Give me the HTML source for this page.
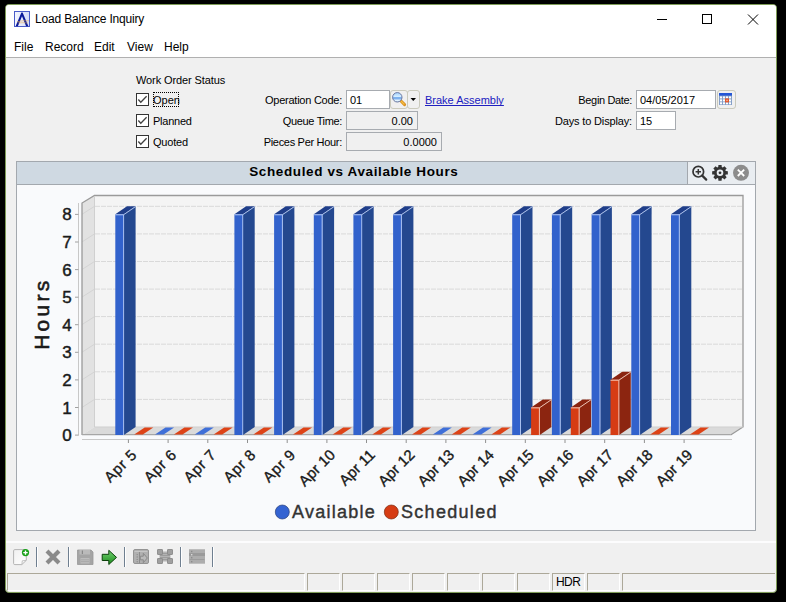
<!DOCTYPE html>
<html><head><meta charset="utf-8">
<style>
*{box-sizing:border-box;margin:0;padding:0}
html,body{width:786px;height:602px;background:#000;overflow:hidden;font-family:"Liberation Sans", sans-serif;}
.abs{position:absolute}
#win{position:absolute;left:5px;top:4px;width:772px;height:589px;background:#f0f0f0;border:1px solid #7e9b57;border-radius:4px;overflow:hidden}
.t{position:absolute;white-space:nowrap;font-size:11px;color:#000;line-height:13px}
.box{position:absolute;background:#fff;border:1px solid #a7abb0}
.ro{background:#f0f0f0}
.cb{position:absolute;width:13px;height:13px;border:1px solid #333;background:#fff}
.sb{position:absolute;top:573px;height:18px;border-top:1px solid #aca899;border-left:1px solid #aca899;border-right:1px solid #fff;border-bottom:1px solid #fff}
.sep{position:absolute;top:547px;width:2px;height:20px;background:#6f7f90;border-right:1px solid #fff}
</style></head><body>
<div id="win"></div>
<!-- title bar -->
<div class="abs" style="left:6px;top:5px;width:770px;height:52px;background:#fff;border-radius:3px 3px 0 0"></div>
<div class="abs" style="left:6px;top:57px;width:770px;height:1px;background:#b0b0b0"></div>
<svg class="abs" style="left:14px;top:11px" width="16" height="16" viewBox="0 0 16 16">
 <defs><linearGradient id="ig" x1="0" y1="0" x2="1" y2="0"><stop offset="0" stop-color="#f4f6ff"/><stop offset="1" stop-color="#d4dcf8"/></linearGradient></defs><rect x="0.5" y="0.5" width="15" height="15" fill="url(#ig)" stroke="#4a5cc8" stroke-width="1"/>
 <path d="M1.6,15.2 L7.4,1.6 L8.6,1.6 L14.4,15.2 L12.1,15.2 L8,5.2 L3.9,15.2 Z" fill="#0a1a9a"/>
 <path d="M3,10.8 Q9,9.2 15,9.8 M4,12 Q9,11.4 14,12" stroke="#e8a848" stroke-width="0.7" fill="none" opacity="0.75"/>
</svg>
<div class="t" style="left:35px;top:12px;font-size:12px;line-height:15px;color:#000;letter-spacing:-0.18px">Load Balance Inquiry</div>
<svg class="abs" style="left:640px;top:5px" width="136" height="30">
 <line x1="17" y1="14.5" x2="27" y2="14.5" stroke="#000" stroke-width="1"/>
 <rect x="62.5" y="9.5" width="9" height="9" fill="none" stroke="#000" stroke-width="1"/>
 <path d="M108,9.5 L118,19.5 M118,9.5 L108,19.5" stroke="#000" stroke-width="1"/>
</svg>
<!-- menu -->
<div class="t" style="left:14px;top:40px;font-size:12px;line-height:15px">File</div>
<div class="t" style="left:45px;top:40px;font-size:12px;line-height:15px">Record</div>
<div class="t" style="left:94px;top:40px;font-size:12px;line-height:15px">Edit</div>
<div class="t" style="left:127px;top:40px;font-size:12px;line-height:15px">View</div>
<div class="t" style="left:164px;top:40px;font-size:12px;line-height:15px">Help</div>

<!-- form -->
<div class="t" style="left:136px;top:74px;letter-spacing:-0.1px">Work Order Status</div>
<div class="cb" style="left:136px;top:93px"></div>
<div class="cb" style="left:136px;top:114px"></div>
<div class="cb" style="left:136px;top:135px"></div>
<svg class="abs" style="left:136px;top:93px" width="13" height="56">
 <path d="M2.3,6.5 L4.8,9.3 L10.6,3.3 M2.3,27.5 L4.8,30.3 L10.6,24.3 M2.3,48.5 L4.8,51.3 L10.6,45.3" fill="none" stroke="#404040" stroke-width="1.3"/>
</svg>
<div class="t" style="left:153px;top:94px">Open</div>
<div class="t" style="left:153px;top:115px;letter-spacing:-0.25px">Planned</div>
<div class="t" style="left:153px;top:136px;letter-spacing:-0.2px">Quoted</div>
<div class="abs" style="left:153px;top:92px;width:26px;height:15px;border:1px dotted #000"></div>

<div class="t" style="left:200px;width:142px;text-align:right;top:94px;letter-spacing:-0.25px">Operation Code:</div>
<div class="t" style="left:200px;width:142px;text-align:right;top:115px;letter-spacing:-0.35px">Queue Time:</div>
<div class="t" style="left:200px;width:142px;text-align:right;top:136px;letter-spacing:-0.3px">Pieces Per Hour:</div>
<div class="box" style="left:346px;top:90px;width:44px;height:19px"></div>
<div class="t" style="left:350px;top:94px">01</div>
<div class="box ro" style="left:346px;top:111px;width:72px;height:19px"></div>
<div class="t" style="left:346px;width:67px;text-align:right;top:115px">0.00</div>
<div class="box ro" style="left:346px;top:132px;width:96px;height:19px"></div>
<div class="t" style="left:346px;width:91px;text-align:right;top:136px">0.0000</div>
<div class="abs" style="left:390px;top:90px;width:18px;height:19px;border:1px solid #cacabc;border-radius:3px"></div>
<div class="abs" style="left:407px;top:90px;width:13px;height:19px;border:1px solid #cacabc;border-radius:3px"></div>
<svg class="abs" style="left:390px;top:90px" width="30" height="19">
 <defs><linearGradient id="mg" x1="0" y1="0" x2="0" y2="1"><stop offset="0" stop-color="#9fd0ff"/><stop offset="0.45" stop-color="#d8f0ff"/><stop offset="0.55" stop-color="#5a9ae8"/><stop offset="0.85" stop-color="#e6f6ff"/><stop offset="1" stop-color="#a8d4f8"/></linearGradient></defs>
 <line x1="11" y1="11" x2="14.6" y2="14.6" stroke="#d89020" stroke-width="3" stroke-linecap="round"/>
 <line x1="11.3" y1="11.3" x2="14" y2="14" stroke="#f8c040" stroke-width="1.2" stroke-linecap="round"/>
 <circle cx="7.3" cy="7.3" r="4.7" fill="url(#mg)" stroke="#6c78a0" stroke-width="1"/>
 <path d="M20.5,8 L26,8 L23.25,11 Z" fill="#000"/>
</svg>
<div class="t" style="left:425px;top:94px;color:#2020c0;text-decoration:underline;text-decoration-skip-ink:none">Brake Assembly</div>

<div class="t" style="left:500px;width:132px;text-align:right;top:94px;letter-spacing:-0.35px">Begin Date:</div>
<div class="t" style="left:500px;width:132px;text-align:right;top:115px;letter-spacing:-0.15px">Days to Display:</div>
<div class="box" style="left:636px;top:90px;width:80px;height:19px"></div>
<div class="t" style="left:640px;top:94px">04/05/2017</div>
<div class="box" style="left:636px;top:111px;width:40px;height:19px"></div>
<div class="t" style="left:640px;top:115px">15</div>
<div class="abs" style="left:717px;top:90px;width:19px;height:19px;border:1px solid #cacabc;border-radius:3px"></div>
<svg class="abs" style="left:719px;top:93px" width="13" height="12">
 <rect x="0" y="0" width="13" height="12" fill="#86a0c8"/>
 <rect x="0" y="0" width="13" height="2.6" fill="#2456d6"/>
 <g fill="#fff">
 <rect x="1" y="3.4" width="2" height="2"/><rect x="4" y="3.4" width="2" height="2"/><rect x="7" y="3.4" width="2" height="2"/><rect x="10" y="3.4" width="2" height="2"/>
 <rect x="1" y="6.4" width="2" height="2"/><rect x="4" y="6.4" width="2" height="2"/><rect x="10" y="6.4" width="2" height="2"/>
 <rect x="1" y="9.3" width="2" height="2"/><rect x="4" y="9.3" width="2" height="2"/><rect x="7" y="9.3" width="2" height="2"/><rect x="10" y="9.3" width="2" height="2"/>
 </g>
 <rect x="6" y="5.4" width="4" height="4" fill="#e0562a"/>
 <rect x="7.3" y="6.7" width="1.4" height="1.4" fill="#f4c0a8"/>
</svg>

<!-- chart panel -->
<div class="abs" style="left:16px;top:161px;width:740px;height:370px;border:1px solid #a3a8ae;background:#f9fafc"></div>
<div class="abs" style="left:17px;top:162px;width:738px;height:23px;background:#cfd9e2;border-bottom:1px solid #a3a8ae"></div>
<div class="abs" style="left:687px;top:162px;width:68px;height:23px;background:#e9edf1;border-left:1px solid #a3a8ae;border-bottom:1px solid #a3a8ae"></div>
<div class="t" style="left:18.8px;width:670px;text-align:center;top:164px;font-size:13.5px;line-height:16px;font-weight:bold;letter-spacing:0.62px">Scheduled vs Available Hours</div>
<svg class="abs" style="left:687px;top:162px" width="68" height="22">
 <circle cx="11.3" cy="9.7" r="5.3" fill="none" stroke="#333" stroke-width="1.7"/>
 <path d="M8.6,9.7 H14 M11.3,7 V12.4" stroke="#333" stroke-width="1.5"/>
 <line x1="15.2" y1="13.6" x2="19.2" y2="17.6" stroke="#333" stroke-width="2.2" stroke-linecap="round"/>
 <g transform="translate(33,10.8)">
  <path d="M5.73,-1.77 L7.84,-1.59 L7.84,1.59 L5.73,1.77 L5.31,2.80 L6.67,4.42 L4.42,6.67 L2.80,5.31 L1.77,5.73 L1.59,7.84 L-1.59,7.84 L-1.77,5.73 L-2.80,5.31 L-4.42,6.67 L-6.67,4.42 L-5.31,2.80 L-5.73,1.77 L-7.84,1.59 L-7.84,-1.59 L-5.73,-1.77 L-5.31,-2.80 L-6.67,-4.42 L-4.42,-6.67 L-2.80,-5.31 L-1.77,-5.73 L-1.59,-7.84 L1.59,-7.84 L1.77,-5.73 L2.80,-5.31 L4.42,-6.67 L6.67,-4.42 L5.31,-2.80 Z" fill="#333"/>
  <circle r="3.3" fill="#e9edf1"/><circle r="1.4" fill="#333"/>
 </g>
 <circle cx="54" cy="10.8" r="8" fill="#8c8c8c"/>
 <path d="M50.8,7.6 L57.2,14 M57.2,7.6 L50.8,14" stroke="#fff" stroke-width="1.8"/>
</svg>
<svg width="786" height="602" style="position:absolute;left:0;top:0">
<rect x="94.5" y="195.5" width="648.5" height="231.5" fill="#f4f4f4"/>
<polygon points="82,203 94.5,195.5 94.5,427 82,435" fill="#e2e2e2"/>
<line x1="95" y1="399.4" x2="743" y2="399.4" stroke="#d9d9d9" stroke-width="1" stroke-dasharray="5,1"/>
<line x1="82" y1="407.4" x2="94.5" y2="399.4" stroke="#d4d4d4" stroke-width="1"/>
<line x1="95" y1="371.8" x2="743" y2="371.8" stroke="#d9d9d9" stroke-width="1" stroke-dasharray="5,1"/>
<line x1="82" y1="379.8" x2="94.5" y2="371.8" stroke="#d4d4d4" stroke-width="1"/>
<line x1="95" y1="344.2" x2="743" y2="344.2" stroke="#d9d9d9" stroke-width="1" stroke-dasharray="5,1"/>
<line x1="82" y1="352.2" x2="94.5" y2="344.2" stroke="#d4d4d4" stroke-width="1"/>
<line x1="95" y1="316.6" x2="743" y2="316.6" stroke="#d9d9d9" stroke-width="1" stroke-dasharray="5,1"/>
<line x1="82" y1="324.6" x2="94.5" y2="316.6" stroke="#d4d4d4" stroke-width="1"/>
<line x1="95" y1="289.1" x2="743" y2="289.1" stroke="#d9d9d9" stroke-width="1" stroke-dasharray="5,1"/>
<line x1="82" y1="297.1" x2="94.5" y2="289.1" stroke="#d4d4d4" stroke-width="1"/>
<line x1="95" y1="261.5" x2="743" y2="261.5" stroke="#d9d9d9" stroke-width="1" stroke-dasharray="5,1"/>
<line x1="82" y1="269.5" x2="94.5" y2="261.5" stroke="#d4d4d4" stroke-width="1"/>
<line x1="95" y1="233.9" x2="743" y2="233.9" stroke="#d9d9d9" stroke-width="1" stroke-dasharray="5,1"/>
<line x1="82" y1="241.9" x2="94.5" y2="233.9" stroke="#d4d4d4" stroke-width="1"/>
<line x1="95" y1="206.3" x2="743" y2="206.3" stroke="#d9d9d9" stroke-width="1" stroke-dasharray="5,1"/>
<line x1="82" y1="214.3" x2="94.5" y2="206.3" stroke="#d4d4d4" stroke-width="1"/>
<polygon points="82,435 94.5,427 743,427 730.6,435" fill="#dadada"/>
<polyline points="82,435 82,203 94.5,195.5 743,195.5 743,427 730.6,435" fill="none" stroke="#9a9a9a" stroke-width="1.3"/>
<line x1="94.5" y1="196" x2="94.5" y2="427" stroke="#d0d0d0" stroke-width="1"/>
<line x1="94.5" y1="427" x2="743" y2="427" stroke="#cfcfcf" stroke-width="1"/>
<line x1="82" y1="434.7" x2="730.6" y2="434.7" stroke="#a6a6a6" stroke-width="1.2"/>
<line x1="78.5" y1="203" x2="78.5" y2="435.5" stroke="#c8c8c8" stroke-width="1"/>
<line x1="75" y1="435.1" x2="78.5" y2="435.1" stroke="#a0a0a0" stroke-width="1"/>
<text x="71.6" y="441.1" text-anchor="end" font-family="Liberation Sans" font-size="17" fill="#1a1a1a" stroke="#1a1a1a" stroke-width="0.45">0</text>
<line x1="75" y1="407.5" x2="78.5" y2="407.5" stroke="#a0a0a0" stroke-width="1"/>
<text x="71.6" y="413.5" text-anchor="end" font-family="Liberation Sans" font-size="17" fill="#1a1a1a" stroke="#1a1a1a" stroke-width="0.45">1</text>
<line x1="75" y1="379.9" x2="78.5" y2="379.9" stroke="#a0a0a0" stroke-width="1"/>
<text x="71.6" y="385.9" text-anchor="end" font-family="Liberation Sans" font-size="17" fill="#1a1a1a" stroke="#1a1a1a" stroke-width="0.45">2</text>
<line x1="75" y1="352.3" x2="78.5" y2="352.3" stroke="#a0a0a0" stroke-width="1"/>
<text x="71.6" y="358.3" text-anchor="end" font-family="Liberation Sans" font-size="17" fill="#1a1a1a" stroke="#1a1a1a" stroke-width="0.45">3</text>
<line x1="75" y1="324.7" x2="78.5" y2="324.7" stroke="#a0a0a0" stroke-width="1"/>
<text x="71.6" y="330.7" text-anchor="end" font-family="Liberation Sans" font-size="17" fill="#1a1a1a" stroke="#1a1a1a" stroke-width="0.45">4</text>
<line x1="75" y1="297.2" x2="78.5" y2="297.2" stroke="#a0a0a0" stroke-width="1"/>
<text x="71.6" y="303.2" text-anchor="end" font-family="Liberation Sans" font-size="17" fill="#1a1a1a" stroke="#1a1a1a" stroke-width="0.45">5</text>
<line x1="75" y1="269.6" x2="78.5" y2="269.6" stroke="#a0a0a0" stroke-width="1"/>
<text x="71.6" y="275.6" text-anchor="end" font-family="Liberation Sans" font-size="17" fill="#1a1a1a" stroke="#1a1a1a" stroke-width="0.45">6</text>
<line x1="75" y1="242.0" x2="78.5" y2="242.0" stroke="#a0a0a0" stroke-width="1"/>
<text x="71.6" y="248.0" text-anchor="end" font-family="Liberation Sans" font-size="17" fill="#1a1a1a" stroke="#1a1a1a" stroke-width="0.45">7</text>
<line x1="75" y1="214.4" x2="78.5" y2="214.4" stroke="#a0a0a0" stroke-width="1"/>
<text x="71.6" y="220.4" text-anchor="end" font-family="Liberation Sans" font-size="17" fill="#1a1a1a" stroke="#1a1a1a" stroke-width="0.45">8</text>
<line x1="82" y1="439.5" x2="732" y2="439.5" stroke="#c8c8c8" stroke-width="1"/>
<line x1="128.4" y1="439.5" x2="128.4" y2="443" stroke="#909090" stroke-width="1"/>
<text transform="translate(137.8,455.7) rotate(-45)" text-anchor="end" font-family="Liberation Sans" font-size="15" letter-spacing="0.6" fill="#1a1a1a" stroke="#1a1a1a" stroke-width="0.35">Apr 5</text>
<line x1="168.1" y1="439.5" x2="168.1" y2="443" stroke="#909090" stroke-width="1"/>
<text transform="translate(177.5,455.7) rotate(-45)" text-anchor="end" font-family="Liberation Sans" font-size="15" letter-spacing="0.6" fill="#1a1a1a" stroke="#1a1a1a" stroke-width="0.35">Apr 6</text>
<line x1="207.8" y1="439.5" x2="207.8" y2="443" stroke="#909090" stroke-width="1"/>
<text transform="translate(217.2,455.7) rotate(-45)" text-anchor="end" font-family="Liberation Sans" font-size="15" letter-spacing="0.6" fill="#1a1a1a" stroke="#1a1a1a" stroke-width="0.35">Apr 7</text>
<line x1="247.5" y1="439.5" x2="247.5" y2="443" stroke="#909090" stroke-width="1"/>
<text transform="translate(256.9,455.7) rotate(-45)" text-anchor="end" font-family="Liberation Sans" font-size="15" letter-spacing="0.6" fill="#1a1a1a" stroke="#1a1a1a" stroke-width="0.35">Apr 8</text>
<line x1="287.2" y1="439.5" x2="287.2" y2="443" stroke="#909090" stroke-width="1"/>
<text transform="translate(296.6,455.7) rotate(-45)" text-anchor="end" font-family="Liberation Sans" font-size="15" letter-spacing="0.6" fill="#1a1a1a" stroke="#1a1a1a" stroke-width="0.35">Apr 9</text>
<line x1="326.9" y1="439.5" x2="326.9" y2="443" stroke="#909090" stroke-width="1"/>
<text transform="translate(336.2,455.7) rotate(-45)" text-anchor="end" font-family="Liberation Sans" font-size="15" letter-spacing="0.05" fill="#1a1a1a" stroke="#1a1a1a" stroke-width="0.35">Apr 10</text>
<line x1="366.5" y1="439.5" x2="366.5" y2="443" stroke="#909090" stroke-width="1"/>
<text transform="translate(375.9,455.7) rotate(-45)" text-anchor="end" font-family="Liberation Sans" font-size="15" letter-spacing="0.05" fill="#1a1a1a" stroke="#1a1a1a" stroke-width="0.35">Apr 11</text>
<line x1="406.2" y1="439.5" x2="406.2" y2="443" stroke="#909090" stroke-width="1"/>
<text transform="translate(415.6,455.7) rotate(-45)" text-anchor="end" font-family="Liberation Sans" font-size="15" letter-spacing="0.05" fill="#1a1a1a" stroke="#1a1a1a" stroke-width="0.35">Apr 12</text>
<line x1="445.9" y1="439.5" x2="445.9" y2="443" stroke="#909090" stroke-width="1"/>
<text transform="translate(455.3,455.7) rotate(-45)" text-anchor="end" font-family="Liberation Sans" font-size="15" letter-spacing="0.05" fill="#1a1a1a" stroke="#1a1a1a" stroke-width="0.35">Apr 13</text>
<line x1="485.6" y1="439.5" x2="485.6" y2="443" stroke="#909090" stroke-width="1"/>
<text transform="translate(495.0,455.7) rotate(-45)" text-anchor="end" font-family="Liberation Sans" font-size="15" letter-spacing="0.05" fill="#1a1a1a" stroke="#1a1a1a" stroke-width="0.35">Apr 14</text>
<line x1="525.3" y1="439.5" x2="525.3" y2="443" stroke="#909090" stroke-width="1"/>
<text transform="translate(534.7,455.7) rotate(-45)" text-anchor="end" font-family="Liberation Sans" font-size="15" letter-spacing="0.05" fill="#1a1a1a" stroke="#1a1a1a" stroke-width="0.35">Apr 15</text>
<line x1="565.0" y1="439.5" x2="565.0" y2="443" stroke="#909090" stroke-width="1"/>
<text transform="translate(574.4,455.7) rotate(-45)" text-anchor="end" font-family="Liberation Sans" font-size="15" letter-spacing="0.05" fill="#1a1a1a" stroke="#1a1a1a" stroke-width="0.35">Apr 16</text>
<line x1="604.7" y1="439.5" x2="604.7" y2="443" stroke="#909090" stroke-width="1"/>
<text transform="translate(614.1,455.7) rotate(-45)" text-anchor="end" font-family="Liberation Sans" font-size="15" letter-spacing="0.05" fill="#1a1a1a" stroke="#1a1a1a" stroke-width="0.35">Apr 17</text>
<line x1="644.4" y1="439.5" x2="644.4" y2="443" stroke="#909090" stroke-width="1"/>
<text transform="translate(653.8,455.7) rotate(-45)" text-anchor="end" font-family="Liberation Sans" font-size="15" letter-spacing="0.05" fill="#1a1a1a" stroke="#1a1a1a" stroke-width="0.35">Apr 18</text>
<line x1="684.1" y1="439.5" x2="684.1" y2="443" stroke="#909090" stroke-width="1"/>
<text transform="translate(693.5,455.7) rotate(-45)" text-anchor="end" font-family="Liberation Sans" font-size="15" letter-spacing="0.05" fill="#1a1a1a" stroke="#1a1a1a" stroke-width="0.35">Apr 19</text>
<polygon points="123.9,435.0 123.9,214.3 135.6,206.3 135.6,427.0" fill="#24488f"/>
<polygon points="115.3,214.3 123.9,214.3 135.6,206.3 127.0,206.3" fill="#1f3e8a"/>
<rect x="115.3" y="214.3" width="8.6" height="220.7" fill="#3262cc"/>
<polyline points="115.3,214.8 123.6,214.8 123.6,435.0" fill="none" stroke="#b9cdf5" stroke-opacity="0.85" stroke-width="1"/>
<line x1="123.6" y1="214.8" x2="135.6" y2="206.6" stroke="#b9cdf5" stroke-opacity="0.85" stroke-width="1"/>
<polygon points="134.2,434.5 142.8,434.5 153.3,427.5 144.7,427.5" fill="#dd4317"/>
<polygon points="155.0,434.5 163.6,434.5 174.1,427.5 165.5,427.5" fill="#3f6fd8"/>
<polygon points="173.9,434.5 182.5,434.5 193.0,427.5 184.4,427.5" fill="#dd4317"/>
<polygon points="194.7,434.5 203.3,434.5 213.8,427.5 205.2,427.5" fill="#3f6fd8"/>
<polygon points="213.6,434.5 222.2,434.5 232.7,427.5 224.1,427.5" fill="#dd4317"/>
<polygon points="243.0,435.0 243.0,214.3 254.7,206.3 254.7,427.0" fill="#24488f"/>
<polygon points="234.4,214.3 243.0,214.3 254.7,206.3 246.1,206.3" fill="#1f3e8a"/>
<rect x="234.4" y="214.3" width="8.6" height="220.7" fill="#3262cc"/>
<polyline points="234.4,214.8 242.7,214.8 242.7,435.0" fill="none" stroke="#b9cdf5" stroke-opacity="0.85" stroke-width="1"/>
<line x1="242.7" y1="214.8" x2="254.7" y2="206.6" stroke="#b9cdf5" stroke-opacity="0.85" stroke-width="1"/>
<polygon points="253.3,434.5 261.9,434.5 272.4,427.5 263.8,427.5" fill="#dd4317"/>
<polygon points="282.7,435.0 282.7,214.3 294.4,206.3 294.4,427.0" fill="#24488f"/>
<polygon points="274.1,214.3 282.7,214.3 294.4,206.3 285.8,206.3" fill="#1f3e8a"/>
<rect x="274.1" y="214.3" width="8.6" height="220.7" fill="#3262cc"/>
<polyline points="274.1,214.8 282.4,214.8 282.4,435.0" fill="none" stroke="#b9cdf5" stroke-opacity="0.85" stroke-width="1"/>
<line x1="282.4" y1="214.8" x2="294.4" y2="206.6" stroke="#b9cdf5" stroke-opacity="0.85" stroke-width="1"/>
<polygon points="293.0,434.5 301.6,434.5 312.1,427.5 303.5,427.5" fill="#dd4317"/>
<polygon points="322.4,435.0 322.4,214.3 334.1,206.3 334.1,427.0" fill="#24488f"/>
<polygon points="313.8,214.3 322.4,214.3 334.1,206.3 325.4,206.3" fill="#1f3e8a"/>
<rect x="313.8" y="214.3" width="8.6" height="220.7" fill="#3262cc"/>
<polyline points="313.8,214.8 322.1,214.8 322.1,435.0" fill="none" stroke="#b9cdf5" stroke-opacity="0.85" stroke-width="1"/>
<line x1="322.1" y1="214.8" x2="334.1" y2="206.6" stroke="#b9cdf5" stroke-opacity="0.85" stroke-width="1"/>
<polygon points="332.7,434.5 341.3,434.5 351.8,427.5 343.2,427.5" fill="#dd4317"/>
<polygon points="362.0,435.0 362.0,214.3 373.7,206.3 373.7,427.0" fill="#24488f"/>
<polygon points="353.4,214.3 362.0,214.3 373.7,206.3 365.1,206.3" fill="#1f3e8a"/>
<rect x="353.4" y="214.3" width="8.6" height="220.7" fill="#3262cc"/>
<polyline points="353.4,214.8 361.7,214.8 361.7,435.0" fill="none" stroke="#b9cdf5" stroke-opacity="0.85" stroke-width="1"/>
<line x1="361.7" y1="214.8" x2="373.7" y2="206.6" stroke="#b9cdf5" stroke-opacity="0.85" stroke-width="1"/>
<polygon points="372.3,434.5 380.9,434.5 391.4,427.5 382.8,427.5" fill="#dd4317"/>
<polygon points="401.7,435.0 401.7,214.3 413.4,206.3 413.4,427.0" fill="#24488f"/>
<polygon points="393.1,214.3 401.7,214.3 413.4,206.3 404.8,206.3" fill="#1f3e8a"/>
<rect x="393.1" y="214.3" width="8.6" height="220.7" fill="#3262cc"/>
<polyline points="393.1,214.8 401.4,214.8 401.4,435.0" fill="none" stroke="#b9cdf5" stroke-opacity="0.85" stroke-width="1"/>
<line x1="401.4" y1="214.8" x2="413.4" y2="206.6" stroke="#b9cdf5" stroke-opacity="0.85" stroke-width="1"/>
<polygon points="412.0,434.5 420.6,434.5 431.1,427.5 422.5,427.5" fill="#dd4317"/>
<polygon points="432.8,434.5 441.4,434.5 451.9,427.5 443.3,427.5" fill="#3f6fd8"/>
<polygon points="451.7,434.5 460.3,434.5 470.8,427.5 462.2,427.5" fill="#dd4317"/>
<polygon points="472.5,434.5 481.1,434.5 491.6,427.5 483.0,427.5" fill="#3f6fd8"/>
<polygon points="491.4,434.5 500.0,434.5 510.5,427.5 501.9,427.5" fill="#dd4317"/>
<polygon points="520.8,435.0 520.8,214.3 532.5,206.3 532.5,427.0" fill="#24488f"/>
<polygon points="512.2,214.3 520.8,214.3 532.5,206.3 523.9,206.3" fill="#1f3e8a"/>
<rect x="512.2" y="214.3" width="8.6" height="220.7" fill="#3262cc"/>
<polyline points="512.2,214.8 520.5,214.8 520.5,435.0" fill="none" stroke="#b9cdf5" stroke-opacity="0.85" stroke-width="1"/>
<line x1="520.5" y1="214.8" x2="532.5" y2="206.6" stroke="#b9cdf5" stroke-opacity="0.85" stroke-width="1"/>
<polygon points="539.7,435.0 539.7,407.4 551.4,399.4 551.4,427.0" fill="#8c2510"/>
<polygon points="531.1,407.4 539.7,407.4 551.4,399.4 542.8,399.4" fill="#8a2410"/>
<rect x="531.1" y="407.4" width="8.6" height="27.6" fill="#d63c14"/>
<polyline points="531.1,407.9 539.4,407.9 539.4,435.0" fill="none" stroke="#f6cfc0" stroke-opacity="0.85" stroke-width="1"/>
<line x1="539.4" y1="407.9" x2="551.4" y2="399.7" stroke="#f6cfc0" stroke-opacity="0.85" stroke-width="1"/>
<polygon points="560.5,435.0 560.5,214.3 572.2,206.3 572.2,427.0" fill="#24488f"/>
<polygon points="551.9,214.3 560.5,214.3 572.2,206.3 563.6,206.3" fill="#1f3e8a"/>
<rect x="551.9" y="214.3" width="8.6" height="220.7" fill="#3262cc"/>
<polyline points="551.9,214.8 560.2,214.8 560.2,435.0" fill="none" stroke="#b9cdf5" stroke-opacity="0.85" stroke-width="1"/>
<line x1="560.2" y1="214.8" x2="572.2" y2="206.6" stroke="#b9cdf5" stroke-opacity="0.85" stroke-width="1"/>
<polygon points="579.4,435.0 579.4,407.4 591.1,399.4 591.1,427.0" fill="#8c2510"/>
<polygon points="570.8,407.4 579.4,407.4 591.1,399.4 582.5,399.4" fill="#8a2410"/>
<rect x="570.8" y="407.4" width="8.6" height="27.6" fill="#d63c14"/>
<polyline points="570.8,407.9 579.1,407.9 579.1,435.0" fill="none" stroke="#f6cfc0" stroke-opacity="0.85" stroke-width="1"/>
<line x1="579.1" y1="407.9" x2="591.1" y2="399.7" stroke="#f6cfc0" stroke-opacity="0.85" stroke-width="1"/>
<polygon points="600.2,435.0 600.2,214.3 611.9,206.3 611.9,427.0" fill="#24488f"/>
<polygon points="591.6,214.3 600.2,214.3 611.9,206.3 603.3,206.3" fill="#1f3e8a"/>
<rect x="591.6" y="214.3" width="8.6" height="220.7" fill="#3262cc"/>
<polyline points="591.6,214.8 599.9,214.8 599.9,435.0" fill="none" stroke="#b9cdf5" stroke-opacity="0.85" stroke-width="1"/>
<line x1="599.9" y1="214.8" x2="611.9" y2="206.6" stroke="#b9cdf5" stroke-opacity="0.85" stroke-width="1"/>
<polygon points="619.1,435.0 619.1,379.8 630.8,371.8 630.8,427.0" fill="#8c2510"/>
<polygon points="610.5,379.8 619.1,379.8 630.8,371.8 622.2,371.8" fill="#8a2410"/>
<rect x="610.5" y="379.8" width="8.6" height="55.2" fill="#d63c14"/>
<polyline points="610.5,380.3 618.8,380.3 618.8,435.0" fill="none" stroke="#f6cfc0" stroke-opacity="0.85" stroke-width="1"/>
<line x1="618.8" y1="380.3" x2="630.8" y2="372.1" stroke="#f6cfc0" stroke-opacity="0.85" stroke-width="1"/>
<polygon points="639.9,435.0 639.9,214.3 651.6,206.3 651.6,427.0" fill="#24488f"/>
<polygon points="631.3,214.3 639.9,214.3 651.6,206.3 643.0,206.3" fill="#1f3e8a"/>
<rect x="631.3" y="214.3" width="8.6" height="220.7" fill="#3262cc"/>
<polyline points="631.3,214.8 639.6,214.8 639.6,435.0" fill="none" stroke="#b9cdf5" stroke-opacity="0.85" stroke-width="1"/>
<line x1="639.6" y1="214.8" x2="651.6" y2="206.6" stroke="#b9cdf5" stroke-opacity="0.85" stroke-width="1"/>
<polygon points="650.2,434.5 658.8,434.5 669.3,427.5 660.7,427.5" fill="#dd4317"/>
<polygon points="679.6,435.0 679.6,214.3 691.3,206.3 691.3,427.0" fill="#24488f"/>
<polygon points="671.0,214.3 679.6,214.3 691.3,206.3 682.7,206.3" fill="#1f3e8a"/>
<rect x="671.0" y="214.3" width="8.6" height="220.7" fill="#3262cc"/>
<polyline points="671.0,214.8 679.3,214.8 679.3,435.0" fill="none" stroke="#b9cdf5" stroke-opacity="0.85" stroke-width="1"/>
<line x1="679.3" y1="214.8" x2="691.3" y2="206.6" stroke="#b9cdf5" stroke-opacity="0.85" stroke-width="1"/>
<polygon points="689.9,434.5 698.5,434.5 709.0,427.5 700.4,427.5" fill="#dd4317"/>
<text transform="translate(49,313.6) rotate(-90)" text-anchor="middle" font-family="Liberation Sans" font-size="21" letter-spacing="3.3" fill="#1a1a1a" stroke="#1a1a1a" stroke-width="0.6">Hours</text>
<circle cx="282.3" cy="512" r="7" fill="#3463d2" stroke="#2a3f7a" stroke-width="0.7"/>
<text x="292" y="517.5" font-family="Liberation Sans" font-size="18" letter-spacing="1.25" fill="#333" stroke="#333" stroke-width="0.4">Available</text>
<circle cx="391.3" cy="512" r="7" fill="#d63c14" stroke="#7a2a10" stroke-width="0.7"/>
<text x="401" y="517.5" font-family="Liberation Sans" font-size="18" letter-spacing="1.3" fill="#333" stroke="#333" stroke-width="0.4">Scheduled</text>
</svg>

<!-- toolbar -->
<div class="abs" style="left:6px;top:541px;width:770px;height:2px;background:#fcfcfd"></div>
<svg class="abs" style="left:0;top:540px" width="230" height="30">
 <defs>
  <linearGradient id="dg" x1="0" y1="0" x2="1" y2="1"><stop offset="0" stop-color="#f0f0f0"/><stop offset="1" stop-color="#ffffff"/></linearGradient>
  <linearGradient id="ag" x1="0" y1="0" x2="0" y2="1"><stop offset="0" stop-color="#70d070"/><stop offset="1" stop-color="#1e8e1e"/></linearGradient>
 </defs>
 <path d="M13.6,10.8 Q13.6,9.6 14.8,9.6 H25 Q26.3,9.6 26.3,10.8 V20.3 L21.8,24.6 H14.8 Q13.6,24.6 13.6,23.4 Z" fill="url(#dg)" stroke="#b4b4b4" stroke-width="1"/>
 <path d="M26.3,20.3 L22.3,20.8 L21.8,24.6" fill="none" stroke="#b4b4b4" stroke-width="0.8"/>
 <circle cx="25.5" cy="12.6" r="3.6" fill="#18a018"/>
 <path d="M23.3,12.6 H27.7 M25.5,10.4 V14.8" stroke="#fff" stroke-width="1.4"/>
 <path d="M47,11 L59,23 M59,11 L47,23" stroke="#8a8a8a" stroke-width="4.2" stroke-linecap="butt"/>
 <path d="M77.5,10 H91 L93,12 V24.5 H77.5 Z" fill="#a4a4a4" stroke="#989898" stroke-width="0.8"/>
 <rect x="79.5" y="10" width="10.5" height="4.5" fill="#bababa"/>
 <rect x="81.8" y="10.5" width="1.2" height="3.5" fill="#888"/>
 <rect x="80.5" y="18" width="9" height="5.5" fill="#bcbcbc"/>
 <path d="M81,19.8 H89 M81,21.6 H89" stroke="#a0a0a0" stroke-width="0.7"/>
 <path d="M102.2,14.3 H108.8 V10.3 L116.5,17.4 L108.8,24.5 V20.5 H102.2 Z" fill="url(#ag)" stroke="#0a400a" stroke-width="1"/>
 <g transform="translate(133,9)">
  <rect x="0.5" y="0.5" width="15" height="14" rx="1.5" fill="#b0b0b0" stroke="#949494" stroke-width="1"/>
  <path d="M1.5,2.5 H14.5" stroke="#c6c6c6" stroke-width="1"/>
  <path d="M6.5,3 V14" stroke="#8c8c8c" stroke-width="1"/>
  <g fill="#8a8a8a"><circle cx="4.2" cy="5.6" r="0.7"/><circle cx="4.2" cy="8" r="0.7"/><circle cx="4.2" cy="10.4" r="0.7"/><circle cx="4.2" cy="12.8" r="0.7"/></g>
  <path d="M7.3,7.2 H10.3 V4.3 L14.3,9 L10.3,13.7 V10.8 H7.3 Z" fill="#bababa" stroke="#8a8a8a" stroke-width="1"/>
 </g>
 <g transform="translate(157,9)">
  <rect x="2.5" y="2.5" width="11" height="10" fill="#b4b4b4"/>
  <path d="M3,4.5 H13 M3,6.5 H13 M3,8.5 H13 M3,10.5 H13" stroke="#9a9a9a" stroke-width="0.9"/>
  <g fill="#a0a0a0" stroke="#8a8a8a" stroke-width="0.9">
   <rect x="0.5" y="0.5" width="5" height="5" rx="0.4"/><rect x="10.5" y="0.5" width="5" height="5" rx="0.4"/>
   <rect x="0.5" y="9.5" width="5" height="5" rx="0.4"/><rect x="10.5" y="9.5" width="5" height="5" rx="0.4"/>
  </g>
 </g>
 <g transform="translate(189,9)">
  <rect x="0" y="0" width="16" height="14.7" fill="#adadad"/>
  <rect x="0" y="4" width="16" height="3" fill="#9a9a9a"/>
  <path d="M0.5,10.5 H15.5" stroke="#9c9c9c" stroke-width="1"/>
  <path d="M0,0.5 H16" stroke="#bdbdbd" stroke-width="1"/>
  <g fill="#8c8c8c"><rect x="2" y="1.8" width="1.4" height="1.4"/><rect x="2" y="5" width="1.4" height="1.4" fill="#d8d8d8"/><rect x="2" y="8" width="1.4" height="1.4"/><rect x="2" y="12" width="1.4" height="1.4"/></g>
 </g>
</svg>
<div class="sep" style="left:36px"></div>
<div class="sep" style="left:68px"></div>
<div class="sep" style="left:124px"></div>
<div class="sep" style="left:180px"></div>
<div class="sep" style="left:212px"></div>

<!-- status bar -->
<div class="sb" style="left:7px;width:298px"></div>
<div class="sb" style="left:307px;width:33px"></div><div class="sb" style="left:342px;width:33px"></div><div class="sb" style="left:377px;width:33px"></div><div class="sb" style="left:412px;width:33px"></div><div class="sb" style="left:447px;width:33px"></div><div class="sb" style="left:482px;width:33px"></div><div class="sb" style="left:517px;width:33px"></div><div class="sb" style="left:552px;width:33px"></div><div class="sb" style="left:587px;width:33px"></div>
<div class="sb" style="left:622px;width:153px;border-right:none"></div>
<div class="t" style="left:556px;top:576px;font-size:12px;letter-spacing:-0.6px">HDR</div>
</body></html>
